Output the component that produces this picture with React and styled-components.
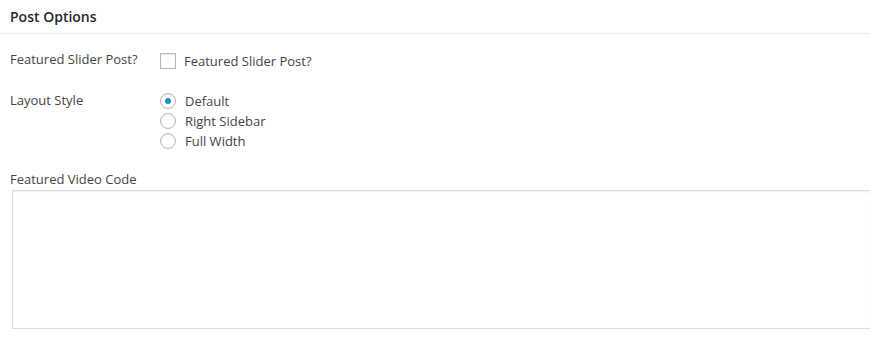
import React from "react";
import styled, { createGlobalStyle } from "styled-components";

const Global = createGlobalStyle`
  html, body { margin: 0; padding: 0; background: #fff; }
  body { font-family: "Open Sans", "Liberation Sans", sans-serif; font-size: 13px; color: #444; }
`;

const Box = styled.div`
  width: 870px;
  background: #fff;
`;

const Header = styled.h2`
  margin: 0;
  padding: 7px 10px;
  font-size: 14px;
  line-height: 19px;
  font-weight: 600;
  color: #23282d;
  border-bottom: 1px solid #eee;
`;

const Body = styled.div`
  padding: 16px 0 0 10px;
`;

const Row = styled.div`
  display: grid;
  grid-template-columns: 150px 1fr;
  margin-bottom: ${(p) => p.$mb || 0}px;
`;

const Label = styled.div`
  line-height: 18px;
  color: #444;
`;

const CheckLine = styled.label`
  display: flex;
  align-items: center;
  gap: 8px;
  margin-top: 2px;
  line-height: 18px;
`;

const Check = styled.span`
  width: 14px;
  height: 14px;
  border: 1px solid #b4b9be;
  box-shadow: inset 0 1px 2px rgba(0,0,0,0.1);
  background: #fff;
  flex: none;
`;

const RadioList = styled.div`
  display: flex;
  flex-direction: column;
`;

const RadioLine = styled.label`
  display: flex;
  align-items: center;
  gap: 9px;
  height: 20px;
  line-height: 18px;
`;

const Radio = styled.span`
  width: 14px;
  height: 14px;
  border: 1px solid #b4b9be;
  border-radius: 50%;
  box-shadow: inset 0 1px 2px rgba(0,0,0,0.1);
  background: #fff;
  flex: none;
  display: flex;
  align-items: center;
  justify-content: center;
  &::after {
    content: "";
    display: ${(p) => (p.$on ? "block" : "none")};
    width: 6px;
    height: 6px;
    border-radius: 50%;
    background: #1e8cbe;
  }
`;

const FieldLabel = styled.div`
  line-height: 18px;
  margin-bottom: 2px;
`;

const TextArea = styled.div`
  margin-left: 2px;
  height: 137px;
  border: 1px solid #ddd;
  border-right: none;
  box-shadow: inset 0 1px 2px rgba(0,0,0,0.07);
`;

export default function App() {
  return (
    <Box>
      <Global />
      <Header>Post Options</Header>
      <Body>
        <Row $mb={21}>
          <Label>Featured Slider Post?</Label>
          <CheckLine>
            <Check />
            <span>Featured Slider Post?</span>
          </CheckLine>
        </Row>
        <Row $mb={19}>
          <Label>Layout Style</Label>
          <RadioList>
            <RadioLine><Radio $on /> Default</RadioLine>
            <RadioLine><Radio /> Right Sidebar</RadioLine>
            <RadioLine><Radio /> Full Width</RadioLine>
          </RadioList>
        </Row>
        <FieldLabel>Featured Video Code</FieldLabel>
        <TextArea />
      </Body>
    </Box>
  );
}
